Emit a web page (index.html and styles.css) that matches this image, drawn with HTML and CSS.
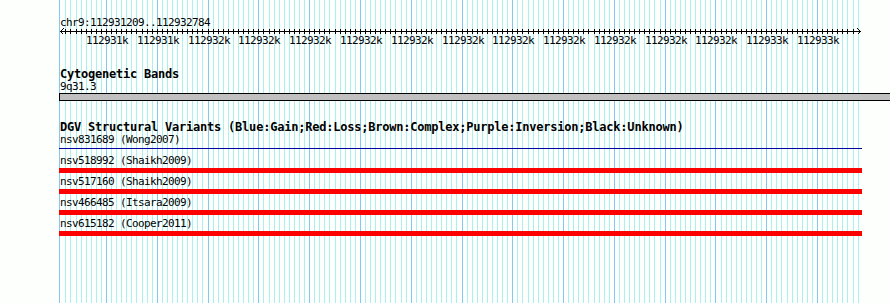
FILE: index.html
```html
<!DOCTYPE html>
<html>
<head>
    <title>chr9:112931209..112932784</title>
    <link rel="stylesheet" href="styles.css">
</head>
<body>
    <div class="gbrowse">
        <svg id="grid" class="grid" width="890" height="303"></svg>

        <div class="tracks">
            <div class="ruler-head">chr9:112931209..112932784</div>
            <svg id="ruler" class="ruler" width="890" height="18"></svg>

            <div class="track cyto">
                <div class="track-title">Cytogenetic Bands</div>
                <div class="feature-label band-label">9q31.3</div>
                <div class="band"></div>
            </div>

            <div class="track dgv">
                <div class="track-title">DGV Structural Variants (Blue:Gain;Red:Loss;Brown:Complex;Purple:Inversion;Black:Unknown)</div>
                <div class="feature">
                    <div class="feature-label">nsv831689 (Wong2007)</div>
                    <div class="glyph"><div class="gain-line"></div></div>
                </div>
                <div class="feature">
                    <div class="feature-label">nsv518992 (Shaikh2009)</div>
                    <div class="glyph loss"></div>
                </div>
                <div class="feature">
                    <div class="feature-label">nsv517160 (Shaikh2009)</div>
                    <div class="glyph loss"></div>
                </div>
                <div class="feature">
                    <div class="feature-label">nsv466485 (Itsara2009)</div>
                    <div class="glyph loss"></div>
                </div>
                <div class="feature">
                    <div class="feature-label">nsv615182 (Cooper2011)</div>
                    <div class="glyph loss"></div>
                </div>
            </div>
        </div>
    </div>

    <script>
        const SVG_NS = 'http://www.w3.org/2000/svg';
        const START = 112931209;
        const END = 112932784;
        const LABELS = {
            1300: '112931k', 1400: '112931k', 1500: '112932k', 1600: '112932k', 1700: '112932k',
            1800: '112932k', 1900: '112932k', 2000: '112932k', 2100: '112932k', 2200: '112932k',
            2300: '112932k', 2400: '112932k', 2500: '112932k', 2600: '112933k', 2700: '112933k'
        };

        // pixel column of a base position (fitted to the 100bp grid lines)
        function xOf(pos) {
            return Math.round(106 + (pos - 112931300) * 0.50786) + 0.5;
        }

        function add(parent, tag, attrs) {
            const el = document.createElementNS(SVG_NS, tag);
            for (const k in attrs) el.setAttribute(k, attrs[k]);
            parent.appendChild(el);
            return el;
        }

        function drawGrid() {
            const grid = document.getElementById('grid');
            add(grid, 'line', { x1: 59.5, y1: 0, x2: 59.5, y2: 303, class: 'major' });
            for (let p = 112931220; p < END; p += 10) {
                const x = xOf(p);
                add(grid, 'line', { x1: x, y1: 0, x2: x, y2: 303, class: p % 100 === 0 ? 'major' : 'minor' });
            }
        }

        function drawRuler() {
            const ruler = document.getElementById('ruler');
            add(ruler, 'line', { x1: 60, y1: 2.5, x2: 861, y2: 2.5, class: 'axis' });
            add(ruler, 'polyline', { points: '63.5,-0.5 60.5,2.5 63.5,5.5', class: 'axis' });
            add(ruler, 'polyline', { points: '857.5,-0.5 860.5,2.5 857.5,5.5', class: 'axis' });
            for (let p = 112931220; p < END - 10; p += 10) {
                const x = xOf(p);
                add(ruler, 'line', { x1: x, y1: 0, x2: x, y2: 5, class: 'axis' });
            }
            for (const rel in LABELS) {
                const t = add(ruler, 'text', { x: xOf(112930000 + Number(rel)) + 0.5, y: 15, class: 'tick-label' });
                t.textContent = LABELS[rel];
            }
        }

        drawGrid();
        drawRuler();
    </script>
</body>
</html>
```

FILE: styles.css
```css
body {
    margin: 0;
    background: #fdfffd;
    color: #000;
    font-family: "DejaVu Sans Mono", "Liberation Mono", monospace;
    font-size: 11px;
    letter-spacing: -0.62px;
}

.gbrowse {
    position: relative;
    width: 890px;
    height: 303px;
    overflow: hidden;
}

.grid {
    position: absolute;
    top: 0;
    left: 0;
    shape-rendering: crispEdges;
}

.grid .minor {
    stroke: #aeeeee;
    stroke-width: 1;
}

.grid .major {
    stroke: #87c6f2;
    stroke-width: 1;
}

.tracks {
    position: relative;
    padding-left: 59px;
}

.ruler-head {
    padding: 16px 0 0 1px;
    line-height: 13px;
}

.ruler {
    display: block;
    margin-left: -59px;
    overflow: visible;
    shape-rendering: crispEdges;
}

.ruler .axis {
    stroke: #000;
    stroke-width: 1;
    fill: none;
}

.tick-label {
    font-family: "DejaVu Sans Mono", "Liberation Mono", monospace;
    font-size: 11px;
    letter-spacing: -0.62px;
    text-anchor: middle;
    fill: #000;
}

.track-title {
    padding-left: 1px;
    font-size: 12px;
    font-weight: bold;
    letter-spacing: -0.22px;
    line-height: 12px;
    white-space: nowrap;
}

.feature-label {
    padding-left: 1px;
    line-height: 12px;
    white-space: nowrap;
}

.cyto {
    margin-top: 21px;
}

.band-label {
    line-height: 13px;
}

.band {
    height: 6px;
    border: 1px solid #000;
    border-right: none;
    background: #c0c0c0;
}

.dgv {
    margin-top: 20px;
}

.dgv .track-title {
    line-height: 13px;
}

.feature {
    height: 21px;
}

.glyph {
    margin-top: 1px;
    width: 803px;
    height: 5px;
}

.loss {
    background: #ff0000;
}

.gain-line {
    margin-top: 2px;
    height: 1px;
    background: #0000a0;
}
```
